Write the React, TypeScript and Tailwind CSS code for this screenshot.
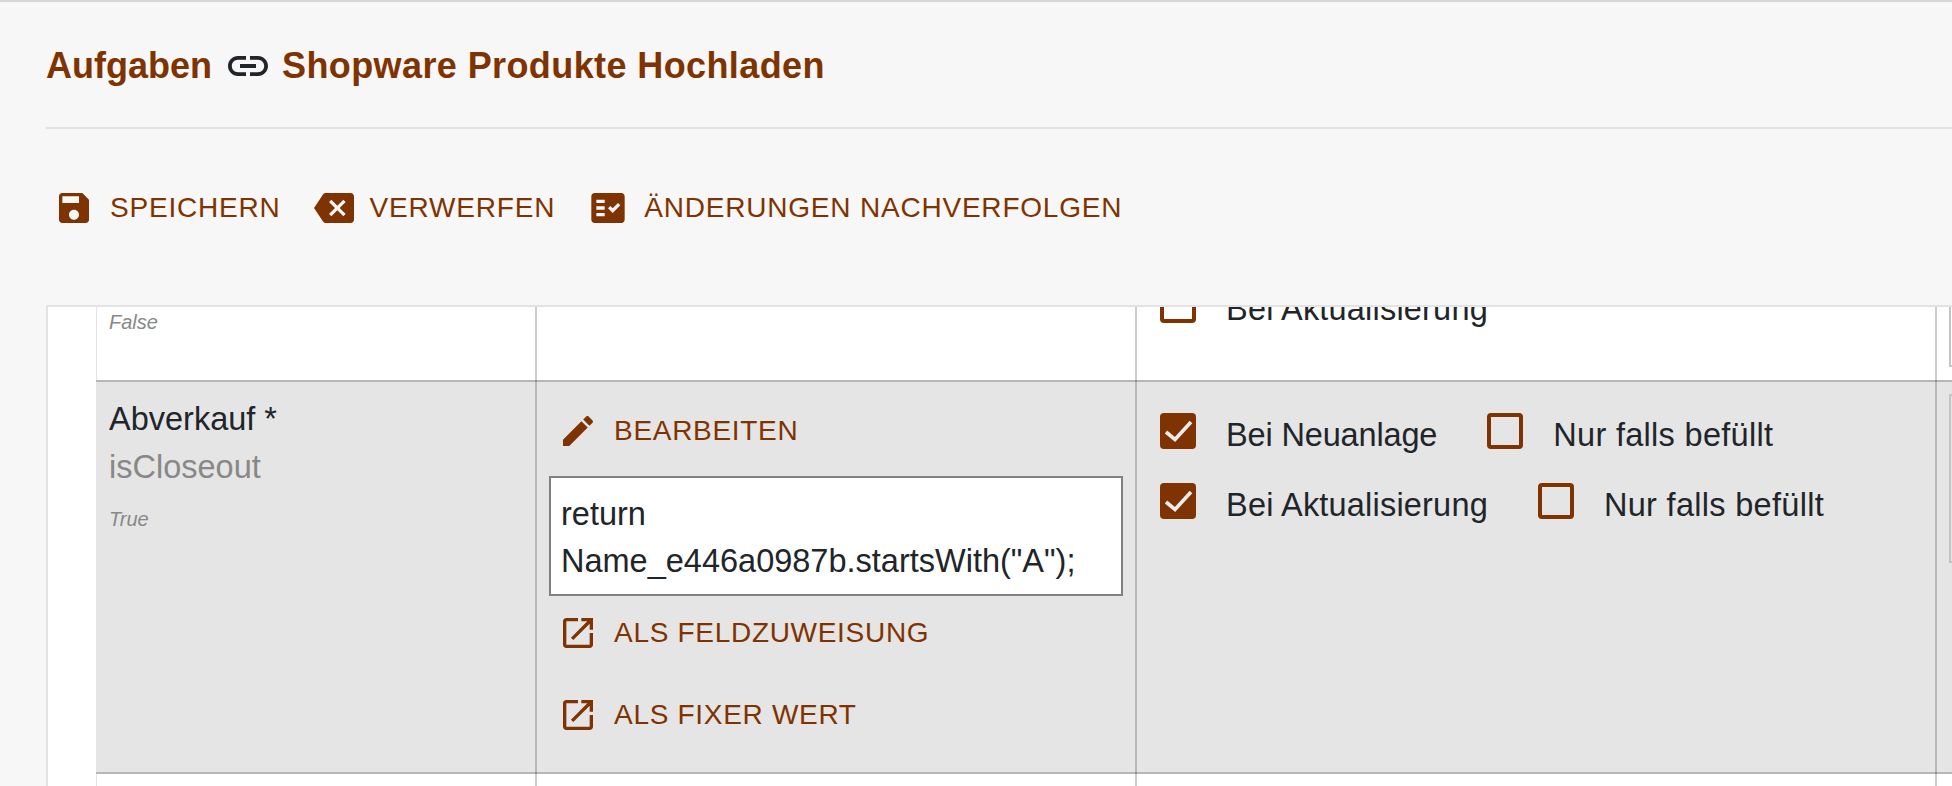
import React from "react";

const P = {
  link: "M3.9 12c0-1.71 1.39-3.1 3.1-3.1h4V7H7c-2.76 0-5 2.24-5 5s2.24 5 5 5h4v-1.9H7c-1.71 0-3.1-1.39-3.1-3.1zM8 13h8v-2H8v2zm9-6h-4v1.9h4c1.71 0 3.1 1.39 3.1 3.1s-1.39 3.1-3.1 3.1h-4V17h4c2.76 0 5-2.24 5-5s-2.24-5-5-5z",
  save: "M17 3H5c-1.11 0-2 .9-2 2v14c0 1.1.89 2 2 2h14c1.1 0 2-.9 2-2V7l-4-4zm-5 16c-1.66 0-3-1.34-3-3s1.34-3 3-3 3 1.34 3 3-1.34 3-3 3zm3-10H5V5h10v4z",
  back: "M22 3H7c-.69 0-1.23.35-1.59.88L0 12l5.41 8.11c.36.53.9.89 1.59.89h15c1.1 0 2-.9 2-2V5c0-1.1-.9-2-2-2zm-3 12.59L17.59 17 14 13.41 10.41 17 9 15.59 12.59 12 9 8.41 10.41 7 14 10.59 17.59 7 19 8.41 15.41 12 19 15.59z",
  fact: "M20 3H4c-1.1 0-2 .9-2 2v14c0 1.1.9 2 2 2h16c1.1 0 2-.9 2-2V5c0-1.1-.9-2-2-2zM10 17H5v-2h5v2zm0-4H5v-2h5v2zm0-4H5V7h5v2zm4.82 6L12 12.16l1.41-1.41 1.41 1.42L17.99 9l1.42 1.42L14.82 15z",
  edit: "M3 17.25V21h3.75L17.81 9.94l-3.75-3.75L3 17.25zM20.71 7.04c.39-.39.39-1.02 0-1.41l-2.34-2.34c-.39-.39-1.02-.39-1.41 0l-1.83 1.83 3.75 3.75 1.83-1.83z",
  open: "M19 19H5V5h7V3H5c-1.11 0-2 .9-2 2v14c0 1.1.89 2 2 2h14c1.1 0 2-.9 2-2v-7h-2v7zM14 3v2h3.59l-9.83 9.83 1.41 1.41L19 6.41V10h2V3h-7z",
};

function Icon({ d, className = "h-10 w-10 text-[#7f3300]" }: { d: string; className?: string }) {
  return (
    <svg viewBox="0 0 24 24" className={`shrink-0 fill-current ${className}`}>
      <path d={d} />
    </svg>
  );
}

function Btn({ d, label, className = "", labelClass = "tracking-[0.8px]" }: { d: string; label: string; className?: string; labelClass?: string }) {
  return (
    <div className={`flex h-10 items-center gap-4 ${className}`}>
      <Icon d={d} />
      <span className={`text-[28px] leading-10 text-[#7f3300] whitespace-nowrap ${labelClass}`}>{label}</span>
    </div>
  );
}

function Check({ checked, label, className = "", labelClass = "" }: { checked?: boolean; label: string; className?: string; labelClass?: string }) {
  return (
    <div className={`flex h-9 items-start gap-[30px] ${className}`}>
      {checked ? (
        <div className="h-9 w-9 shrink-0 rounded-[4px] bg-[#7f3300]">
          <svg viewBox="0 0 36 36" className="h-9 w-9">
            <path d="M6 19l9 7.5L31 9" fill="none" stroke="#ececec" strokeWidth="3.6" />
          </svg>
        </div>
      ) : (
        <div className="h-9 w-9 shrink-0 rounded-[4px] border-4 border-[#7f3300]" />
      )}
      <span className={`pt-1 text-[32.5px] leading-9 text-[#212529] whitespace-nowrap ${labelClass}`}>{label}</span>
    </div>
  );
}

const col = "shrink-0 border-r-2 border-black/20";

function Sample() {
  return <div className="ml-3 mt-3 h-[169px] w-[300px] border-2 border-[#c4c4c4]" />;
}

export default function App() {
  return (
    <div className="flex h-[786px] w-full flex-col overflow-hidden border-t-2 border-[#d6d6d6] bg-[#f7f7f7] font-['Liberation_Sans',sans-serif]">
      <div className="ml-[46px] flex h-[127px] shrink-0 items-center border-b-2 border-[#e1e1e1] pt-[3px] text-[36px] font-bold text-[#7f3300]">
        <span>Aufgaben</span>
        <Icon d={P.link} className="ml-3 mr-[10px] h-12 w-12 text-[#212529]" />
        <span className="tracking-[0.4px]">Shopware Produkte Hochladen</span>
      </div>
      <div className="flex h-[176px] shrink-0 items-start pl-[54px] pt-[59px]">
        <Btn d={P.save} label="SPEICHERN" />
        <Btn d={P.back} label="VERWERFEN" className="ml-[33px]" />
        <Btn d={P.fact} label="ÄNDERUNGEN NACHVERFOLGEN" className="ml-[33px]" />
      </div>
      <div className="ml-[46px] min-h-0 flex-1 overflow-hidden border-l-2 border-t-2 border-[#e3e3e3] bg-white pl-12">
        <div className="-mt-[121px] w-[1900px] border-l border-[#e3e3e3]">
          <div className="flex h-[194px]">
            <div className={`${col} w-[440px] pl-3 pt-[121px] text-[20px] italic leading-[30px] text-[#888]`}>False</div>
            <div className={`${col} w-[600px]`} />
            <div className={`${col} w-[800px] pl-[23px] pt-[101px]`}>
              <Check label="Bei Aktualisierung" labelClass="tracking-[0.2px]" />
            </div>
            <Sample />
          </div>
          <div className="-ml-px flex h-[394px] border-y-2 border-black/20 bg-[#e5e5e5] pl-px">
            <div className={`${col} -my-[2px] w-[440px] pl-3 pt-[15px]`}>
              <div className="text-[32.5px] leading-[48px] text-[#212529]">Abverkauf *</div>
              <div className="text-[32.5px] leading-[48px] text-[#888]">isCloseout</div>
              <div className="mt-[13px] text-[20px] italic leading-[30px] text-[#888]">True</div>
            </div>
            <div className={`${col} -my-[2px] w-[600px] pl-3 pt-[31px]`}>
              <Btn d={P.edit} label="BEARBEITEN" className="ml-[9px]" labelClass="tracking-[0.7px]" />
              <div className="mt-[25px] h-[120px] w-[574px] border-2 border-[#808080] bg-white pl-[10px] pt-[13px] text-[32.5px] leading-[47px] text-[#212529]">
                return
                <br />
                Name_e446a0987b.startsWith("A");
              </div>
              <Btn d={P.open} label="ALS FELDZUWEISUNG" className="ml-[9px] mt-[17px]" labelClass="tracking-[0.7px]" />
              <Btn d={P.open} label="ALS FIXER WERT" className="ml-[9px] mt-[42px]" labelClass="tracking-[0.7px]" />
            </div>
            <div className={`${col} -my-[2px] flex w-[800px] flex-col gap-[34px] pl-[23px] pt-[33px]`}>
              <div className="flex">
                <Check checked label="Bei Neuanlage" labelClass="tracking-[-0.15px]" />
                <Check label="Nur falls befüllt" className="ml-[50px]" labelClass="tracking-[0.3px]" />
              </div>
              <div className="flex">
                <Check checked label="Bei Aktualisierung" labelClass="tracking-[0.2px]" />
                <Check label="Nur falls befüllt" className="ml-[50px]" labelClass="tracking-[0.3px]" />
              </div>
            </div>
            <Sample />
          </div>
          <div className="flex h-[60px]">
            <div className={`${col} w-[440px]`} />
            <div className={`${col} w-[600px]`} />
            <div className={`${col} w-[800px]`} />
          </div>
        </div>
      </div>
    </div>
  );
}
